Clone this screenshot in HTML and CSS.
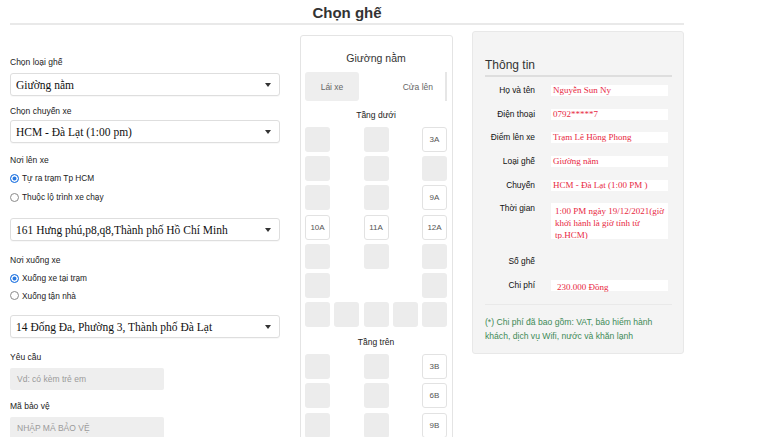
FILE: index.html
```html
<!DOCTYPE html>
<html lang="vi">
<head>
<meta charset="utf-8">
<title>Chọn ghế</title>
<link rel="stylesheet" href="styles.css">
</head>
<body>
<div class="page">
  <h1 class="page-title">Chọn ghế</h1>
  <div class="main">
    <div class="form-col">
      <div class="lbl lbl-first">Chọn loại ghế</div>
      <div class="select"><span>Giường nằm</span><i class="caret"></i></div>
      <div class="lbl">Chọn chuyến xe</div>
      <div class="select"><span>HCM - Đà Lạt (1:00 pm)</span><i class="caret"></i></div>
      <div class="lbl lbl-sec">Nơi lên xe</div>
      <div class="radio-row"><span class="radio checked"></span>Tự ra trạm Tp HCM</div>
      <div class="radio-row"><span class="radio"></span>Thuộc lộ trình xe chạy</div>
      <div class="select select-after-radio"><span>161 Hưng phú,p8,q8,Thành phố Hồ Chí Minh</span><i class="caret"></i></div>
      <div class="lbl lbl-sec lbl-down">Nơi xuống xe</div>
      <div class="radio-row radio-row-tight"><span class="radio checked"></span>Xuống xe tại trạm</div>
      <div class="radio-row radio-row-tight"><span class="radio"></span>Xuống tận nhà</div>
      <div class="select select-after-radio"><span>14 Đống Đa, Phường 3, Thành phố Đà Lạt</span><i class="caret"></i></div>
      <div class="lbl lbl-sec lbl-input">Yêu cầu</div>
      <div class="input">Vd: có kèm trẻ em</div>
      <div class="lbl lbl-sec lbl-input lbl-input2">Mã bảo vệ</div>
      <div class="input">NHẬP MÃ BẢO VỆ</div>
    </div>

    <div class="seat-panel">
      <div class="seat-title">Giường nằm</div>
      <div class="driver-row">
        <div class="driver">Lái xe</div>
        <div class="door">Cửa lên</div>
        <div class="driver-bar"></div>
      </div>
      <div class="deck-title">Tầng dưới</div>
      <div class="seats">
        <div class="seat"></div><div></div><div class="seat"></div><div></div><div class="seat free">3A</div>
        <div class="seat"></div><div></div><div class="seat"></div><div></div><div class="seat"></div>
        <div class="seat"></div><div></div><div class="seat"></div><div></div><div class="seat free">9A</div>
        <div class="seat free">10A</div><div></div><div class="seat free">11A</div><div></div><div class="seat free">12A</div>
        <div class="seat"></div><div></div><div class="seat"></div><div></div><div class="seat"></div>
        <div class="seat"></div><div></div><div></div><div></div><div class="seat"></div>
        <div class="seat"></div><div class="seat"></div><div class="seat"></div><div class="seat"></div><div class="seat"></div>
      </div>
      <div class="deck-title deck-title-upper">Tầng trên</div>
      <div class="seats">
        <div class="seat"></div><div></div><div class="seat"></div><div></div><div class="seat free">3B</div>
        <div class="seat"></div><div></div><div class="seat"></div><div></div><div class="seat free">6B</div>
        <div class="seat"></div><div></div><div class="seat"></div><div></div><div class="seat free">9B</div>
      </div>
    </div>

    <div class="info-panel">
      <div class="info-title">Thông tin</div>
      <div class="info-row"><div class="info-lbl">Họ và tên</div><div class="info-val">Nguyễn Sun Ny</div></div>
      <div class="info-row"><div class="info-lbl">Điện thoại</div><div class="info-val">0792*****7</div></div>
      <div class="info-row"><div class="info-lbl">Điểm lên xe</div><div class="info-val">Trạm Lê Hồng Phong</div></div>
      <div class="info-row"><div class="info-lbl">Loại ghế</div><div class="info-val">Giường nằm</div></div>
      <div class="info-row"><div class="info-lbl">Chuyến</div><div class="info-val">HCM - Đà Lạt (1:00 PM )</div></div>
      <div class="info-row info-row-tall"><div class="info-lbl">Thời gian</div><div class="info-val info-val-tall">1:00 PM ngày 19/12/2021(giờ khởi hành là giờ tính từ tp.HCM)</div></div>
      <div class="info-row"><div class="info-lbl">Số ghế</div></div>
      <div class="info-row"><div class="info-lbl">Chi phí</div><div class="info-val info-val-low">230.000 Đồng</div></div>
      <div class="info-note">(*) Chi phí đã bao gồm: VAT, bảo hiểm hành khách, dịch vụ Wifi, nước và khăn lạnh</div>
    </div>
  </div>
</div>
</body>
</html>
```
FILE: styles.css
```css
* { box-sizing: border-box; }
html, body { margin: 0; padding: 0; background: #fff; }
body { font-family: "Liberation Sans", Arial, sans-serif; color: #222; overflow: hidden; height: 437px; }

.page { width: 674px; margin-left: 10px; height: 437px; overflow: hidden; }

.page-title {
  margin: 0;
  padding-top: 4px;
  height: 25px;
  font-size: 15px;
  line-height: 18px;
  font-weight: bold;
  text-align: center;
  color: #333;
  border-bottom: 2px solid #e9e9e9;
}

.main { display: flex; align-items: flex-start; }

/* left form column */
.form-col { width: 270px; display: flex; flex-direction: column; }
.lbl { font-size: 8.5px; line-height: 12px; height: 12px; color: #222; margin: 9px 0 3px; }
.lbl-first { margin-top: 31px; margin-bottom: 5px; }
.lbl-sec { margin-top: 11px; margin-bottom: 6px; }
.lbl-down { margin-top: 13px; }
.lbl-input { margin-top: 13px; margin-bottom: 5px; }
.lbl-input2 { margin-top: 10px; }

.select {
  height: 23px;
  border: 1px solid #dedede;
  border-radius: 3px;
  background: #fff;
  display: flex;
  align-items: center;
  justify-content: space-between;
  padding: 0 8px 0 5px;
  font-family: "Liberation Serif", "Times New Roman", serif;
  font-size: 11.5px;
  color: #111;
  box-shadow: 0 1px 1px rgba(0,0,0,0.03);
}
.select-after-radio { margin-top: 8px; }
.caret { width: 0; height: 0; border-left: 3.5px solid transparent; border-right: 3.5px solid transparent; border-top: 4px solid #333; }

.radio-row { display: flex; align-items: center; font-size: 8.3px; line-height: 12px; height: 12px; margin-bottom: 7px; color: #222; }
.radio-row-tight { margin-bottom: 5.5px; }
.radio {
  width: 9px; height: 9px; border-radius: 50%;
  border: 1px solid #8a8a8a; background: #fff;
  margin-right: 3px;
}
.radio.checked { border-color: #2a7ae2; background: #2a7ae2; box-shadow: inset 0 0 0 1.5px #fff; }

.input {
  width: 154px; height: 22px; flex: none; background: #eeeeee; border-radius: 2px;
  font-size: 8.5px; line-height: 22px; padding-left: 7px; color: #9a9a9a;
}

/* seat panel */
.seat-panel {
  width: 153px;
  margin-left: 20px;
  margin-top: 10px;
  border: 1px solid #e4e4e4;
  border-radius: 3px;
  padding: 0 5px 20px 4px;
}
.seat-title { font-size: 10.5px; line-height: 14px; text-align: center; color: #333; margin-top: 15px; }
.driver-row { display: flex; align-items: center; height: 29px; margin-top: 7px; }
.driver { width: 54px; height: 29px; background: #eeeeee; border-radius: 3px; font-size: 8.5px; color: #666; display: flex; align-items: center; justify-content: center; }
.door { flex: 1; text-align: right; padding-right: 12px; font-size: 8.5px; color: #666; }
.driver-bar { width: 2px; height: 29px; background: #e6e6e6; }
.deck-title { font-size: 8.5px; line-height: 12px; text-align: center; color: #222; margin: 8px 0 6px; }
.deck-title-upper { margin-top: 9px; }
.seats { display: grid; grid-template-columns: repeat(5, 25px); grid-auto-rows: 25px; column-gap: 4.25px; row-gap: 4.2px; }
.seat { background: #ececec; border-radius: 3px; }
.seat.free { background: #fff; border: 1px solid #e2e2e2; font-size: 8px; color: #555; display: flex; align-items: center; justify-content: center; }

/* info panel */
.info-panel {
  width: 212px;
  margin-left: 19px;
  margin-top: 6px;
  background: #f4f4f4;
  border: 1px solid #e8e8e8;
  border-radius: 3px;
  padding: 26px 11px 10px 12px;
}
.info-title { font-size: 12px; line-height: 14px; color: #333; padding-bottom: 3px; border-bottom: 2px solid #dedede; margin-bottom: 8px; }
.info-row { display: flex; align-items: flex-start; margin-bottom: 12.7px; min-height: 11px; }
.info-row-tall { margin-bottom: 17px; }
.info-lbl { width: 50px; text-align: right; font-size: 8.4px; line-height: 11px; color: #111; }
.info-val {
  margin-left: 16px; width: 117px; height: 11px; background: #fff;
  font-family: "Liberation Serif", "Times New Roman", serif; font-size: 9px; line-height: 11px;
  color: #e8293f; padding-left: 2px; overflow: hidden; white-space: nowrap;
}
.info-val-tall { height: 36px; white-space: normal; padding: 2px 0 0 4px; line-height: 12px; }
.info-val-low { padding-left: 6px; line-height: 15px; overflow: visible; }
.info-note {
  border-top: 1px solid #e9e9e9;
  padding-top: 10px;
  font-size: 8.6px; line-height: 14px; color: #3e8a57;
}
```
